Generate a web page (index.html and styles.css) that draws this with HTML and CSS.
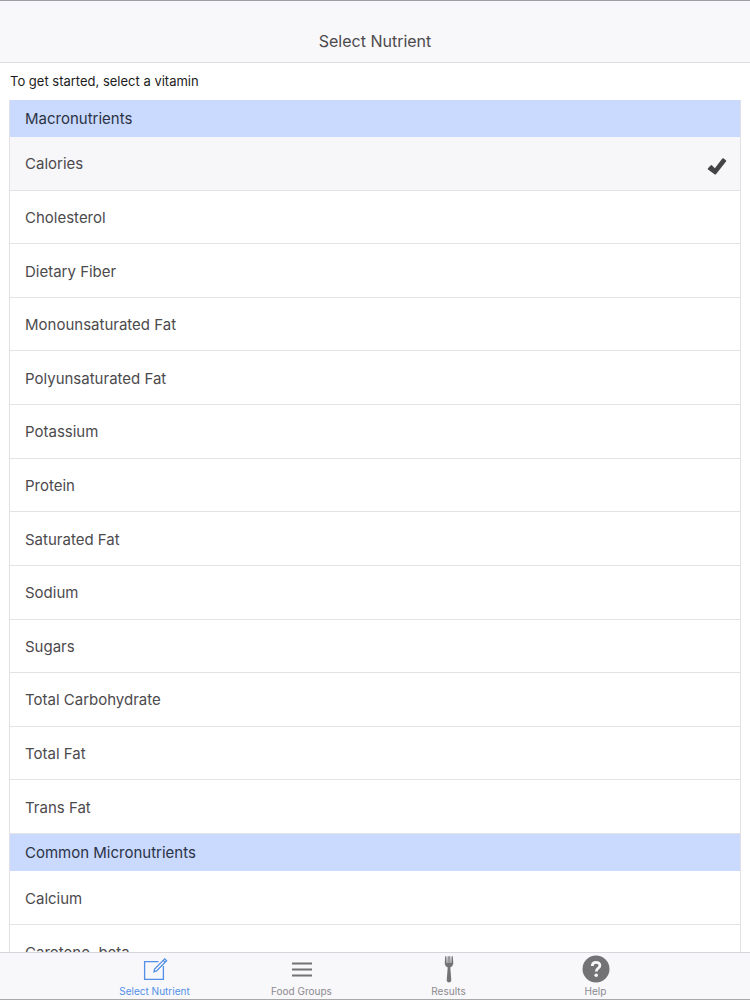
FILE: index.html
```
<!DOCTYPE html>
<html lang="en">
<head>
  <meta charset="UTF-8" />
  <meta name="viewport" content="width=device-width, initial-scale=1.0"/>
  <title>Select Nutrient</title>
  <link rel="stylesheet" href="styles.css">
</head>
<body>
  <header class="top-bar">
    <h1>Select Nutrient</h1>
  </header>

  <main class="content">
    <p class="intro">To get started, select a vitamin</p>

    <div class="nutrients">
      <h2>Macronutrients</h2>
      <ul class="macro-list">
        <li class="selected">
          <button type="button" aria-pressed="true">
            Calories
            <svg class="check" viewBox="0 0 20 20" aria-hidden="true">
              <path d="M1 12.2 L3.9 9.2 Q4.5 8.8 5.1 9.4 L7.9 12.2 L15.3 2.6 Q15.9 1.9 16.7 2.4 L18.9 4.2 Q19.6 4.8 19 5.6 L9.2 18 Q8.2 19 7.2 18 L1 13.4 Q.5 12.8 1 12.2 Z" fill="#444"/>
            </svg>
          </button>
        </li>
        <li><button type="button">Cholesterol</button></li>
        <li><button type="button">Dietary Fiber</button></li>
        <li><button type="button">Monounsaturated Fat</button></li>
        <li><button type="button">Polyunsaturated Fat</button></li>
        <li><button type="button">Potassium</button></li>
        <li><button type="button">Protein</button></li>
        <li><button type="button">Saturated Fat</button></li>
        <li><button type="button">Sodium</button></li>
        <li><button type="button">Sugars</button></li>
        <li><button type="button">Total Carbohydrate</button></li>
        <li><button type="button">Total Fat</button></li>
        <li><button type="button">Trans Fat</button></li>
      </ul>

      <h2>Common Micronutrients</h2>
      <ul>
        <li><button type="button">Calcium</button></li>
        <li><button type="button">Carotene, beta</button></li>
      </ul>
    </div>
  </main>

  <!-- Bottom tabs -->
  <nav class="tab-bar">
    <a href="#select" class="tab active" aria-current="page">
      <svg viewBox="0 0 28 28" aria-hidden="true">
        <g fill="none" stroke="currentColor" stroke-width="1.3">
          <path d="M17.5 6.6 H3.6 V24.4 H22.4 V11"/>
          <path d="M13 16.8 L13.6 14 L23.7 3.9 L25.6 5.8 L15.6 15.9 Z M22.2 5.4 L24.1 7.3"/>
        </g>
      </svg>
      <span>Select Nutrient</span>
    </a>
    <a href="#groups" class="tab">
      <svg viewBox="0 0 28 28" aria-hidden="true">
        <path d="M4 8.5 H24 M4 14.5 H24 M4 20.5 H24" fill="none" stroke="currentColor" stroke-width="2"/>
      </svg>
      <span>Food Groups</span>
    </a>
    <a href="#results" class="tab">
      <svg viewBox="0 0 28 28" aria-hidden="true">
        <path d="M10.2 1.5 Q10.8 .4 11.4 1.5 L11.7 8 H12.4 L12.7 1.5 Q13.2 .4 13.7 1.5 V8 H14.3 V1.5 Q14.8 .4 15.3 1.5 L15.6 8 H16.3 L16.6 1.5 Q17.2 .4 17.8 1.5 L18.3 8.6 Q18.2 11 15.3 12.4 L16.3 25.5 Q15.8 27.6 14 27.6 Q12.2 27.6 11.7 25.5 L12.7 12.4 Q9.8 11 9.7 8.6 Z" fill="currentColor"/>
      </svg>
      <span>Results</span>
    </a>
    <a href="#help" class="tab">
      <svg viewBox="0 0 28 28" aria-hidden="true">
        <circle cx="14" cy="14" r="13.5" fill="currentColor"/>
        <path d="M10.3 11 C10.4 6.2 17.9 6.3 17.9 10.6 C17.9 13.4 14.2 13.2 14.2 16.6" fill="none" stroke="#f8f7fa" stroke-width="2.8"/>
        <circle cx="14.2" cy="20.2" r="1.8" fill="#f8f7fa"/>
      </svg>
      <span>Help</span>
    </a>
  </nav>
</body>
</html>
```
FILE: styles.css
```
* {
  box-sizing: border-box;
}

body {
  display: flex;
  flex-direction: column;
  height: 100vh;
  margin: 0;
  font-family: Inter, "Liberation Sans", sans-serif;
  color: #4c4a4d;
  background-color: #fff;
  border-top: 1px solid #a09da3;
  border-bottom: 1px solid #a9a8ab;
}

/* Title bar, with room for the status bar */
.top-bar {
  flex: none;
  padding: 28px 16px 8px;
  text-align: center;
  background-color: #f8f7fa;
  border-bottom: 1px solid #dddce0;
}

h1 {
  margin: 0;
  font-size: 16px;
  font-weight: 400;
  line-height: 25px;
}

.content {
  flex: 1;
  min-height: 0;
  padding: 0 9px;
  overflow-y: auto;
  scrollbar-width: none;
}

.intro {
  margin: 0;
  padding: 8px 1px;
  color: #1c1c1c;
  font-size: 13px;
  line-height: 21px;
}

.nutrients {
  border: 1px solid #e2e0e4;
  border-top: none;
}

h2 {
  margin: 0;
  padding: 0 15px;
  color: #2a3345;
  background-color: #cad9fe;
  font-size: 15px;
  font-weight: 400;
  line-height: 37px;
}

ul {
  display: grid;
  grid-auto-rows: 54px;
  margin: 0;
  padding: 0;
  list-style: none;
}

/* 13 equal rows */
.macro-list {
  grid-auto-rows: 1fr;
  height: 697px;
}

li {
  border-bottom: 1px solid #e4e2e5;
}

li.selected {
  background-color: #f7f6f8;
}

li button {
  display: flex;
  align-items: center;
  justify-content: space-between;
  width: 100%;
  height: 100%;
  padding: 1px 13px 0 15px;
  color: inherit;
  background: none;
  border: none;
  font-family: inherit;
  font-size: 15px;
  text-align: left;
  cursor: pointer;
}

.check {
  width: 20px;
  height: 20px;
  margin-top: 4px;
}

.tab-bar {
  display: flex;
  flex: none;
  justify-content: center;
  background-color: #f8f7fa;
  border-top: 1px solid #d6d5d9;
}

.tab {
  display: flex;
  flex-direction: column;
  align-items: center;
  width: 147px;
  padding-top: 2px;
  color: #737275;
  font-size: 10px;
  line-height: 16px;
  text-decoration: none;
}

.tab svg {
  width: 28px;
  height: 28px;
}

.tab span {
  color: #8b8a8e;
}

.tab.active,
.tab.active span {
  color: #5290e8;
}
```
